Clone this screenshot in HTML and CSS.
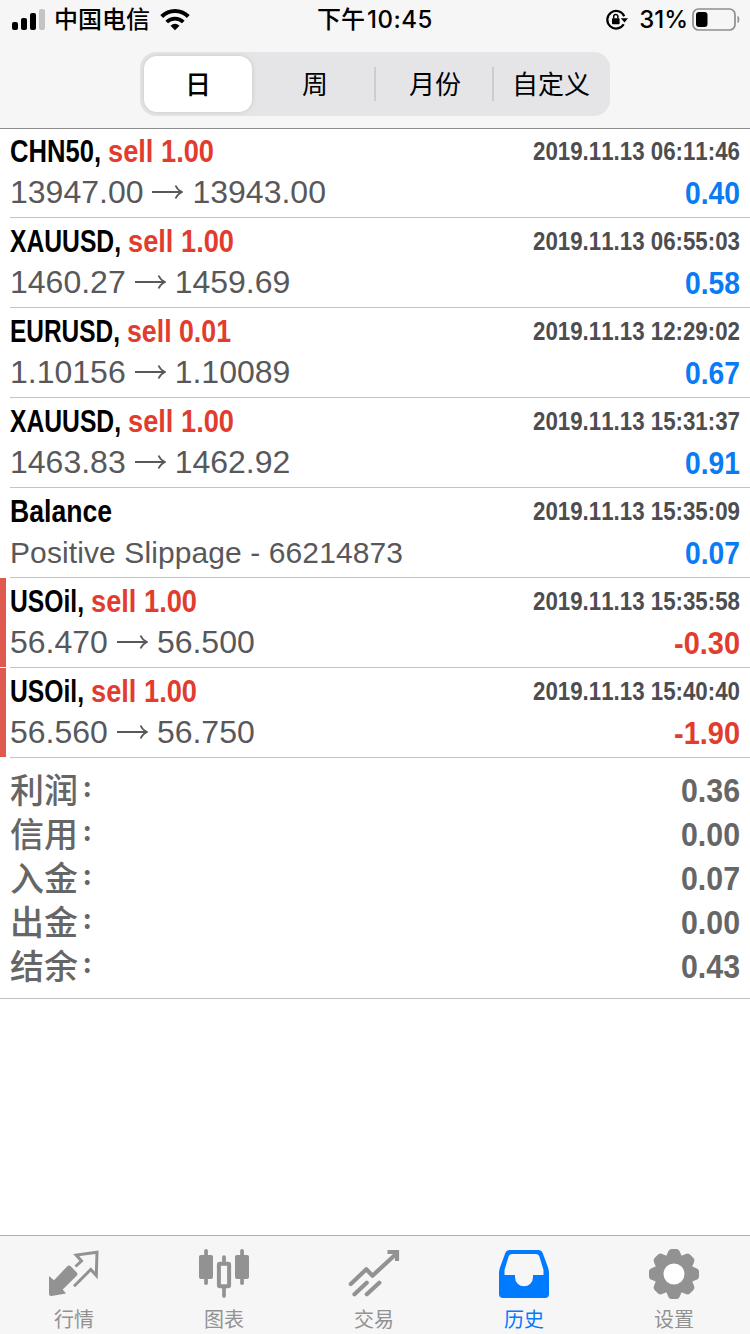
FILE: index.html
```html
<!DOCTYPE html>
<html lang="zh-CN">
<head>
<meta charset="utf-8">
<title>历史</title>
<link rel="stylesheet" href="styles.css">
</head>
<body>
<div class="app">
  <header class="top">
    <div class="status">
      <div class="carrier">
        <svg class="signal" width="34" height="22" viewBox="0 0 34 22">
          <rect x="0" y="13" width="6" height="8" rx="2"/><rect x="9" y="9" width="6" height="12" rx="2"/><rect x="18" y="4" width="6" height="17" rx="2"/><rect x="27" y="0" width="6" height="21" rx="2" fill="#c4c4c5"/>
        </svg>
        <span class="carrier-name">中国电信</span>
        <svg class="wifi" width="30" height="22" viewBox="0 0 30 22">
          <path d="M1.700 7.500C9.200.2 20.800.2 28.300 7.500" fill="none" stroke="#000" stroke-width="4"/>
          <path d="M6.700 13C11.400 8.400 18.600 8.400 23.300 13" fill="none" stroke="#000" stroke-width="3.800"/>
          <path d="M10.500 16.700Q15 12.800 19.500 16.700L15 21.300Z"/>
        </svg>
      </div>
      <div class="time"><span>下午</span><span class="clock">10:45</span></div>
      <div class="power">
        <svg class="lock" width="22" height="22" viewBox="0 0 22 22">
          <path d="M17.700 15.200A8.800 8.800 0 1 1 18.200 7.200" fill="none" stroke="#000" stroke-width="2.200"/>
          <path d="M14.800 9.200H22L18.500 13.500Z"/>
          <rect x="6" y="9.200" width="7.600" height="6" rx=".8"/>
          <path d="M7.700 9.500V7.600a2.100 2.100 0 0 1 4.200 0V9.500" fill="none" stroke="#000" stroke-width="1.500"/>
        </svg>
        <span class="percent">31%</span>
        <svg class="battery" width="48" height="24" viewBox="0 0 48 24">
          <rect x="1" y="1" width="42" height="21" rx="5.500" fill="none" stroke="#8f8f90" stroke-width="1.700"/>
          <rect x="4" y="4" width="11.500" height="15" rx="3"/>
          <path d="M46 8.500q2 3 0 6z" fill="#8f8f90" stroke="#8f8f90"/>
        </svg>
      </div>
    </div>
    <nav class="segments">
      <div class="segment segment-on">日</div>
      <div class="segment">周</div>
      <div class="segment divided">月份</div>
      <div class="segment divided">自定义</div>
    </nav>
  </header>

  <main class="content">
    <section class="deals" id="deals"></section>
    <section class="summary">
      <div class="total"><span>利润<i class="colon">:</i></span><b class="fit" data-w="59">0.36</b></div>
      <div class="total"><span>信用<i class="colon">:</i></span><b class="fit" data-w="59">0.00</b></div>
      <div class="total"><span>入金<i class="colon">:</i></span><b class="fit" data-w="59">0.07</b></div>
      <div class="total"><span>出金<i class="colon">:</i></span><b class="fit" data-w="59">0.00</b></div>
      <div class="total"><span>结余<i class="colon">:</i></span><b class="fit" data-w="59">0.43</b></div>
    </section>
  </main>

  <nav class="tabs">
    <div class="tab">
      <svg width="52" height="52" viewBox="0 0 52 52">
        <path d="M1 27L6 31.300 19.300 17.300Q21 15.700 22.700 17.300L28.700 23.500Q30.300 25.200 28.700 26.800L14.700 40.500 18 44.500 3.500 47Q1 47.300 1 45Z" fill="#929292"/>
        <path d="M27.500 17.500L33.500 12 28.200 6 49 3.300 48.300 26.500 42.800 20.500 26 37.300" fill="none" stroke="#929292" stroke-width="3"/>
      </svg>
      <span>行情</span>
    </div>
    <div class="tab">
      <svg width="52" height="52" viewBox="0 0 52 52" fill="#929292">
        <rect x="1" y="6" width="14" height="24" rx="2"/><rect x="6.200" y="0" width="3.700" height="36" rx="1.800"/>
        <rect x="37" y="6" width="14" height="24" rx="2"/><rect x="42.200" y="0" width="3.700" height="36" rx="1.800"/>
        <rect x="20.900" y="14.700" width="10.200" height="22.500" rx="1" fill="none" stroke="#929292" stroke-width="4"/>
        <path d="M26 8v6M26 39v8" stroke="#929292" stroke-width="3.700" stroke-linecap="round"/>
      </svg>
      <span>图表</span>
    </div>
    <div class="tab">
      <svg width="52" height="52" viewBox="0 0 52 52" fill="none" stroke="#929292" stroke-width="4.200" stroke-linecap="round" stroke-linejoin="round">
        <path d="M2.800 35L18.300 20.300 24.500 26.700 48 5M6.500 45.200L18.700 33.700M18.800 45.200L31.300 33.700"/>
        <path d="M39.500 3H49V12" stroke-linecap="butt" stroke-linejoin="miter"/>
      </svg>
      <span>交易</span>
    </div>
    <div class="tab tab-on">
      <svg width="52" height="52" viewBox="0 0 52 52">
        <path fill="#007aff" fill-rule="evenodd" d="M12 1H40Q43.500 1 44.700 4L50 18.500Q51 21.500 51 25V45Q51 49 47 49H5Q1 49 1 45V25Q1 21.500 2 18.500L7.300 4Q8.500 1 12 1ZM14.500 5Q11.500 5 10.700 7.300L6.500 21V26H17V28.300A9 9 0 0 0 35 28.300V26H45.500V21L41.300 7.300Q40.500 5 37.500 5Z"/>
      </svg>
      <span>历史</span>
    </div>
    <div class="tab">
      <svg width="52" height="52" viewBox="-26 -25 52 52" fill="#929292">
        <g id="gear"></g>
        <circle r="19.800"/><circle r="10.500" fill="#fff"/>
      </svg>
      <span>设置</span>
    </div>
  </nav>
</div>
<script src="app.js"></script>
</body>
</html>
```

FILE: styles.css
```css
* { box-sizing: border-box; }
body {
  margin: 0;
  background: #fff;
  color: #000;
  font-family: "Liberation Sans", "Noto Sans CJK SC", sans-serif;
  font-kerning: none;
}
svg { display: block; flex: none; }
.app { width: 750px; height: 1334px; display: flex; flex-direction: column; overflow: hidden; }

.top { height: 129px; flex: none; background: #f6f6f6; border-bottom: 1px solid #8c8c8e; }
.status {
  height: 40px;
  display: grid;
  grid-template-columns: 1fr auto 1fr;
  align-items: center;
  font: 24px/40px Inter, "Noto Sans CJK SC", sans-serif;
}
.carrier, .power { display: flex; align-items: center; }
.carrier { padding-left: 12px; }
.carrier-name { margin: 0 10px 0 8px; font-weight: 500; }
.time { display: flex; gap: 2px; font-weight: 500; }
.time, .carrier-name { white-space: nowrap; }
.clock, .percent { letter-spacing: .5px; font-weight: 500; }
.power { justify-content: flex-end; padding-right: 10px; }
.percent { margin: 0 4px 0 11px; letter-spacing: 0; }

.segments {
  width: 470px;
  height: 64px;
  margin: 12px auto 0;
  padding: 4px;
  display: grid;
  grid-template-columns: 108px 122px 118px 114px;
  border-radius: 16px;
  background: #e5e5e7;
}
.segment {
  display: flex;
  align-items: center;
  justify-content: center;
  font: 26px/54px "Noto Sans CJK SC", sans-serif;
  padding: 0 0 2px 4px;
  background: linear-gradient(#cdcdd0, #cdcdd0) no-repeat left center / 0 34px;
}
.segment.divided { background-size: 2px 34px; }
.segment-on {
  padding-left: 0;
  background: #fff;
  border-radius: 13px;
  font-weight: 500;
  box-shadow: 0 0 5px rgba(0, 0, 0, .13);
}

.content { flex: 1; }
.deal { display: flex; height: 90px; }
.deal:first-child { height: 89px; }
.deal:first-child .deal-body { padding-top: 2px; }
.deal::before { content: ""; width: 6px; height: 89px; margin-right: 4px; }
.deal.loss::before { background: #e0594f; }
.deal-body { flex: 1; padding: 3px 10px 0 0; border-bottom: 1px solid #c4c4c7; }
.line { display: flex; justify-content: space-between; height: 41px; line-height: 41px; }
.fit { display: block; flex: none; white-space: pre; transform-origin: left center; }
.title { display: flex; gap: 7px; font-size: 31px; font-weight: bold; }
.side { color: #e23c2f; }
.stamp { font-size: 25.500px; font-weight: bold; color: #4d4d50; }
.prices { display: flex; align-items: center; font-size: 32px; color: #58585b; }
.arrow { margin: 0 9px 1px; }
.note { font-size: 30px; letter-spacing: .1px; color: #58585b; }
.profit { font-size: 31px; font-weight: bold; color: #087bf5; line-height: 43px; }
.loss .profit { color: #e23c2f; }

.summary { height: 241px; padding: 9px 10px 0; border-bottom: 1px solid #c0c0c3; }
.total {
  height: 44px;
  display: flex;
  justify-content: space-between;
  font: 500 34px/44px "Noto Sans CJK SC", sans-serif;
  color: #666;
}
.total span { display: flex; align-items: center; }
.total b { font-family: "Liberation Sans", sans-serif; font-size: 34px; line-height: 46px; }
.colon {
  margin-left: 5px;
  padding-bottom: 7px;
  font-size: 26px;
  font-style: normal;
  font-weight: bold;
  line-height: 36px;
}

.tabs {
  height: 99px;
  flex: none;
  display: grid;
  grid-template-columns: repeat(5, 150px);
  margin: 0 -1px;
  padding-right: 2px;
  background: #f6f6f6;
  border-top: 1px solid #b0b0b2;
}
.tab {
  padding-top: 13px;
  display: flex;
  flex-direction: column;
  align-items: center;
  font: 20px/36px "Noto Sans CJK SC", sans-serif;
  color: #929292;
}
.tab-on { color: #007aff; }
```

FILE: app.js
```js
// w: condensed widths of [symbol, side]
const deals = [
  { s: 'CHN50,', w: [91, 106], side: 'sell 1.00', from: '13947.00', to: '13943.00', at: '2019.11.13 06:11:46', p: '0.40' },
  { s: 'XAUUSD,', w: [111, 106], side: 'sell 1.00', from: '1460.27', to: '1459.69', at: '2019.11.13 06:55:03', p: '0.58' },
  { s: 'EURUSD,', w: [110, 104], side: 'sell 0.01', from: '1.10156', to: '1.10089', at: '2019.11.13 12:29:02', p: '0.67' },
  { s: 'XAUUSD,', w: [111, 106], side: 'sell 1.00', from: '1463.83', to: '1462.92', at: '2019.11.13 15:31:37', p: '0.91' },
  { s: 'Balance', w: [102], note: 'Positive Slippage - 66214873', at: '2019.11.13 15:35:09', p: '0.07' },
  { s: 'USOil,', w: [74, 106], side: 'sell 1.00', from: '56.470', to: '56.500', at: '2019.11.13 15:35:58', p: '-0.30' },
  { s: 'USOil,', w: [74, 106], side: 'sell 1.00', from: '56.560', to: '56.750', at: '2019.11.13 15:40:40', p: '-1.90' }
];
const arrow = '<svg class="arrow" width="31" height="16" viewBox="0 0 31 16" fill="none" stroke="#58585b" stroke-width="1.800"><path d="M0 8H29.500M23.500 1.500Q25.500 6 30 8Q25.500 10 23.500 14.500"/></svg>';
document.getElementById('deals').innerHTML = deals.map(d => `
  <article class="deal${d.p[0] === '-' ? ' loss' : ''}"><div class="deal-body">
    <div class="line">
      <div class="title"><span class="fit" data-w="${d.w[0]}">${d.s}</span>${d.side ? `<span class="fit side" data-w="${d.w[1]}">${d.side}</span>` : ''}</div>
      <span class="fit stamp" data-w="207">${d.at}</span>
    </div>
    <div class="line">
      ${d.note ? `<span class="note">${d.note}</span>` : `<div class="prices">${d.from}${arrow}${d.to}</div>`}
      <span class="fit profit" data-w="${d.p[0] === '-' ? 66 : 55}">${d.p}</span>
    </div>
  </div></article>`).join('');

// Condense each label to its column width
document.querySelectorAll('.fit').forEach(el => {
  const natural = el.getBoundingClientRect().width;
  const width = Number(el.dataset.w);
  el.style.width = width + 'px';
  el.style.transform = `scaleX(${width / natural})`;
});

// Gear teeth
document.getElementById('gear').innerHTML = [0, 45, 90, 135, 180, 225, 270, 315].map(a =>
  `<path transform="rotate(${a})" d="M-8-17L-5.800-22.500Q-4.900-25-2.500-25H2.500Q4.900-25 5.800-22.500L8-17Z"/>`).join('');
```
